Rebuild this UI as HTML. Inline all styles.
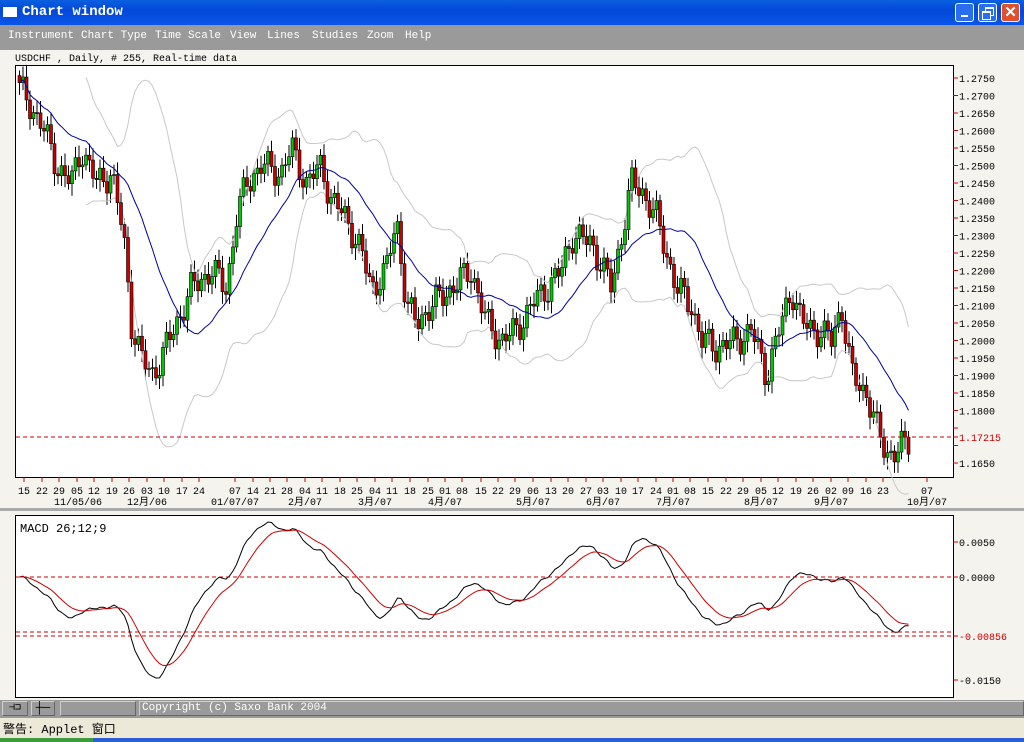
<!DOCTYPE html>
<html><head><meta charset="utf-8">
<style>
body{margin:0;width:1024px;height:742px;overflow:hidden;background:#ece9d8;font-family:"Liberation Mono","Noto Sans CJK SC",monospace;}
#title{position:absolute;left:0;top:0;width:1024px;height:25px;background:linear-gradient(#0a5fe0,#0348d8 40%,#0a55e8);}
#title .ic{position:absolute;left:3px;top:7px;width:14px;height:10px;background:#fff;}
#title .t{position:absolute;left:22px;top:4px;color:#fff;font:bold 14px "Liberation Mono",monospace;}
.wb{position:absolute;top:3px;width:19px;height:19px;border:1px solid #fff;border-radius:3px;background:#2a6ef0;box-sizing:border-box;}
#menu{position:absolute;left:0;top:25px;width:1024px;height:25px;background:#9a9a9a;color:#fff;font-size:11px;}
#menu span{position:absolute;top:5px;}
#area{position:absolute;left:0;top:50px;width:1024px;height:650px;background:#f4f3ee;}
#status{position:absolute;left:0;top:700px;width:1024px;height:18px;background:#9a9a9a;}
#status .b{position:absolute;top:1px;height:15px;border:1px solid #d0d0d0;border-right-color:#666;border-bottom-color:#666;box-sizing:border-box;}
#warn{position:absolute;left:0;top:718px;width:1024px;height:20px;background:#ece9d8;font-size:12px;}
#task{position:absolute;left:0;top:738px;width:1024px;height:4px;background:#2a5fd8;}
</style></head><body>
<div id="title"><div class="ic"></div><div class="t">Chart window</div>
<div class="wb" style="left:955px"><div style="position:absolute;left:5px;top:11px;width:7px;height:2px;background:#fff"></div></div>
<div class="wb" style="left:978px"><div style="position:absolute;left:6px;top:3px;width:7px;height:6px;border:1px solid #fff;border-top-width:2px"></div><div style="position:absolute;left:3px;top:7px;width:7px;height:6px;border:1px solid #fff;border-top-width:2px;background:#2a6ef0"></div></div>
<div class="wb" style="left:1001px;background:#e0502a;color:#fff;font:bold 15px sans-serif;text-align:center;line-height:17px">✕</div>
</div>
<div id="menu"><span style="left:8px">Instrument</span><span style="left:81px">Chart Type</span><span style="left:155px">Time Scale</span><span style="left:230px">View</span><span style="left:267px">Lines</span><span style="left:312px">Studies</span><span style="left:367px">Zoom</span><span style="left:405px">Help</span></div>
<div id="area">
<svg id="s" width="1024" height="650" style="position:absolute;left:0;top:0" font-family="Liberation Mono, Noto Sans CJK SC, monospace" font-size="10"></svg>
</div>
<div id="status">
<div class="b" style="left:2px;width:26px;font-size:10px;line-height:13px;text-align:center">⊣⊐</div>
<div class="b" style="left:31px;width:24px;font-size:12px;line-height:12px;text-align:center">┼─</div>
<div class="b" style="left:60px;width:76px"></div>
<div class="b" style="left:139px;width:885px;color:#fff;font-size:11px;line-height:13px;padding-left:2px">Copyright (c) Saxo Bank 2004</div>
</div>
<div id="warn"><span style="position:absolute;left:3px;top:2px">警告: Applet 窗口</span></div>
<div id="task"><div style="width:93px;height:4px;background:#3c9a3c"></div></div>
<script>
var S=document.getElementById('s'),oy=50,h='';
function L(x1,y1,x2,y2,c,extra){h+='<line x1="'+x1+'" y1="'+(y1-oy)+'" x2="'+x2+'" y2="'+(y2-oy)+'" stroke="'+c+'" '+(extra||'')+'/>';}
function T(x,y,t,c,a){h+='<text x="'+x+'" y="'+(y-oy)+'" fill="'+(c||'#000')+'" text-anchor="'+(a||'start')+'">'+t+'</text>';}
T(15,61,'USDCHF , Daily, # 255, Real-time data');
h+='<rect x="15.5" y="'+(65.5-oy)+'" width="938" height="412" fill="#fff" stroke="#000"/>';
h+='<rect x="15.5" y="'+(515.5-oy)+'" width="938" height="182" fill="#fff" stroke="#000"/>';
h+='<rect x="0" y="'+(508-oy)+'" width="1024" height="3" fill="#aaa"/>';
function py(p){return 78+(1.2750-p)/0.005*17.5;}
for(var i=0;i<23;i++){var p=1.2750-i*0.005,y=py(p);L(953,y,958,y,'#c00');if(i==20||i==21)continue;T(959,y+4,p.toFixed(4));}
var kp=[[18,1.272],[40,1.262],[55,1.250],[70,1.245],[80,1.255],[95,1.245],[110,1.248],[122,1.230],[130,1.205],[140,1.195],[150,1.190],[160,1.195],[175,1.205],[190,1.215],[210,1.220],[225,1.215],[235,1.235],[245,1.245],[260,1.250],[280,1.248],[290,1.255],[305,1.245],[320,1.250],[330,1.240],[345,1.235],[360,1.225],[370,1.215],[385,1.220],[395,1.235],[405,1.210],[415,1.205],[430,1.210],[450,1.215],[470,1.220],[485,1.205],[500,1.200],[515,1.203],[530,1.210],[545,1.215],[560,1.220],[570,1.230],[590,1.228],[610,1.215],[620,1.230],[630,1.245],[640,1.243],[655,1.235],[665,1.225],[675,1.215],[690,1.210],[700,1.200],[715,1.198],[735,1.200],[750,1.203],[765,1.190],[775,1.200],[790,1.215],[800,1.205],[815,1.203],[830,1.200],[840,1.210],[850,1.190],[865,1.185],[875,1.175],[885,1.168],[895,1.168],[906,1.171]];
function ip(x){for(var k=1;k<kp.length;k++){if(x<=kp[k][0]){var a=kp[k-1],b=kp[k],t=(x-a[0])/(b[0]-a[0]);return a[1]+(b[1]-a[1])*t;}}return kp[kp.length-1][1];}
var N=255,xs=[],cl=[];
for(var i=0;i<N;i++){var x=18+i*3.5;xs.push(x);cl.push(ip(x)+0.003*Math.sin(i*1.7)+0.002*Math.sin(i*0.9+1));}
var prev=cl[0]+0.002,body='';
for(var i=0;i<N;i++){var o=prev,c=cl[i],hi=Math.max(o,c)+0.0015+0.002*Math.abs(Math.sin(i*2.3)),lo=Math.min(o,c)-0.0015-0.002*Math.abs(Math.cos(i*1.9));
var x=xs[i];L(x+1.5,py(hi),x+1.5,py(lo),'#000');
var yt=py(Math.max(o,c)),yb=py(Math.min(o,c));if(yb-yt<1)yb=yt+1;
body+='<rect x="'+x+'" y="'+(yt-oy)+'" width="3" height="'+(yb-yt)+'" fill="'+(c>=o?'#00c800':'#c80000')+'" stroke="#000" stroke-width="0.6"/>';prev=c;}
var ma=[],up=[],dn=[];for(var i=0;i<N;i++){var n=Math.min(20,i+1),s=0;for(var j=i-n+1;j<=i;j++)s+=cl[j];var m=s/n,v=0;for(var j=i-n+1;j<=i;j++)v+=(cl[j]-m)*(cl[j]-m);var sd=Math.sqrt(v/n);ma.push(m);up.push(m+2*sd);dn.push(m-2*sd);}
function pl(arr,c,f,st){var d='',k=0;for(var i=(st||0);i<N;i++){d+=(k?'L':'M')+(xs[i]+1.5).toFixed(1)+' '+(f(arr[i])-oy).toFixed(1);k++;}h+='<path d="'+d+'" fill="none" stroke="'+c+'" stroke-width="1"/>';}
pl(up,'#c8c8c8',py,19);pl(dn,'#c8c8c8',py,19);
h+=body;pl(ma,'#0000a0',py);
L(16,437,953,437,'#c00','stroke-dasharray="4,3"');L(953,437,958,437,'#c00');T(959,441,'1.17215','#c00');
var d1=[[24,'15'],[42,'22'],[59,'29'],[77,'05'],[94,'12'],[112,'19'],[129,'26'],[147,'03'],[164,'10'],[182,'17'],[199,'24'],[235,'07'],[253,'14'],[270,'21'],[287,'28'],[305,'04'],[322,'11'],[340,'18'],[357,'25'],[375,'04'],[392,'11'],[410,'18'],[428,'25'],[445,'01'],[462,'08'],[481,'15'],[498,'22'],[515,'29'],[533,'06'],[551,'13'],[568,'20'],[586,'27'],[603,'03'],[621,'10'],[638,'17'],[656,'24'],[673,'01'],[690,'08'],[708,'15'],[726,'22'],[743,'29'],[761,'05'],[778,'12'],[796,'19'],[813,'26'],[831,'02'],[848,'09'],[866,'16'],[883,'23'],[927,'07']];
d1.forEach(function(a){L(a[0],477,a[0],482,'#c00');T(a[0],494,a[1],'#000','middle');});
[[78,'11/05/06'],[147,'12月/06'],[235,'01/07/07'],[305,'2月/07'],[375,'3月/07'],[445,'4月/07'],[533,'5月/07'],[603,'6月/07'],[673,'7月/07'],[761,'8月/07'],[831,'9月/07'],[927,'10月/07']].forEach(function(a){T(a[0],505,a[1],'#000','middle');});
function ema(a,n){var k=2/(n+1),r=[a[0]];for(var i=1;i<a.length;i++)r.push(a[i]*k+r[i-1]*(1-k));return r;}
var e12=ema(cl,12),e26=ema(cl,26),mc=[];for(var i=0;i<N;i++)mc.push(e12[i]-e26[i]);var sg=ema(mc,9);
var mx=Math.max.apply(null,mc),mn=Math.min.apply(null,mc),sc=Math.max(mx/55,-mn/112);
function my(v){return 577-v/sc;}
pl(mc,'#000',my);pl(sg,'#c00',my);
L(16,577,953,577,'#c00','stroke-dasharray="4,3"');L(16,632,953,632,'#c00','stroke-dasharray="4,3"');L(16,636,953,636,'#c00','stroke-dasharray="4,3"');
[[542,'0.0050'],[577,'0.0000'],[680,'-0.0150']].forEach(function(a){L(953,a[0],958,a[0],'#c00');T(959,a[0]+4,a[1]);});
L(953,636,958,636,'#c00');T(959,640,'-0.00856','#c00');
h+='<text x="20" y="'+(532-oy)+'" font-size="12">MACD 26;12;9</text>';
S.innerHTML=h;
</script>
</body></html>
